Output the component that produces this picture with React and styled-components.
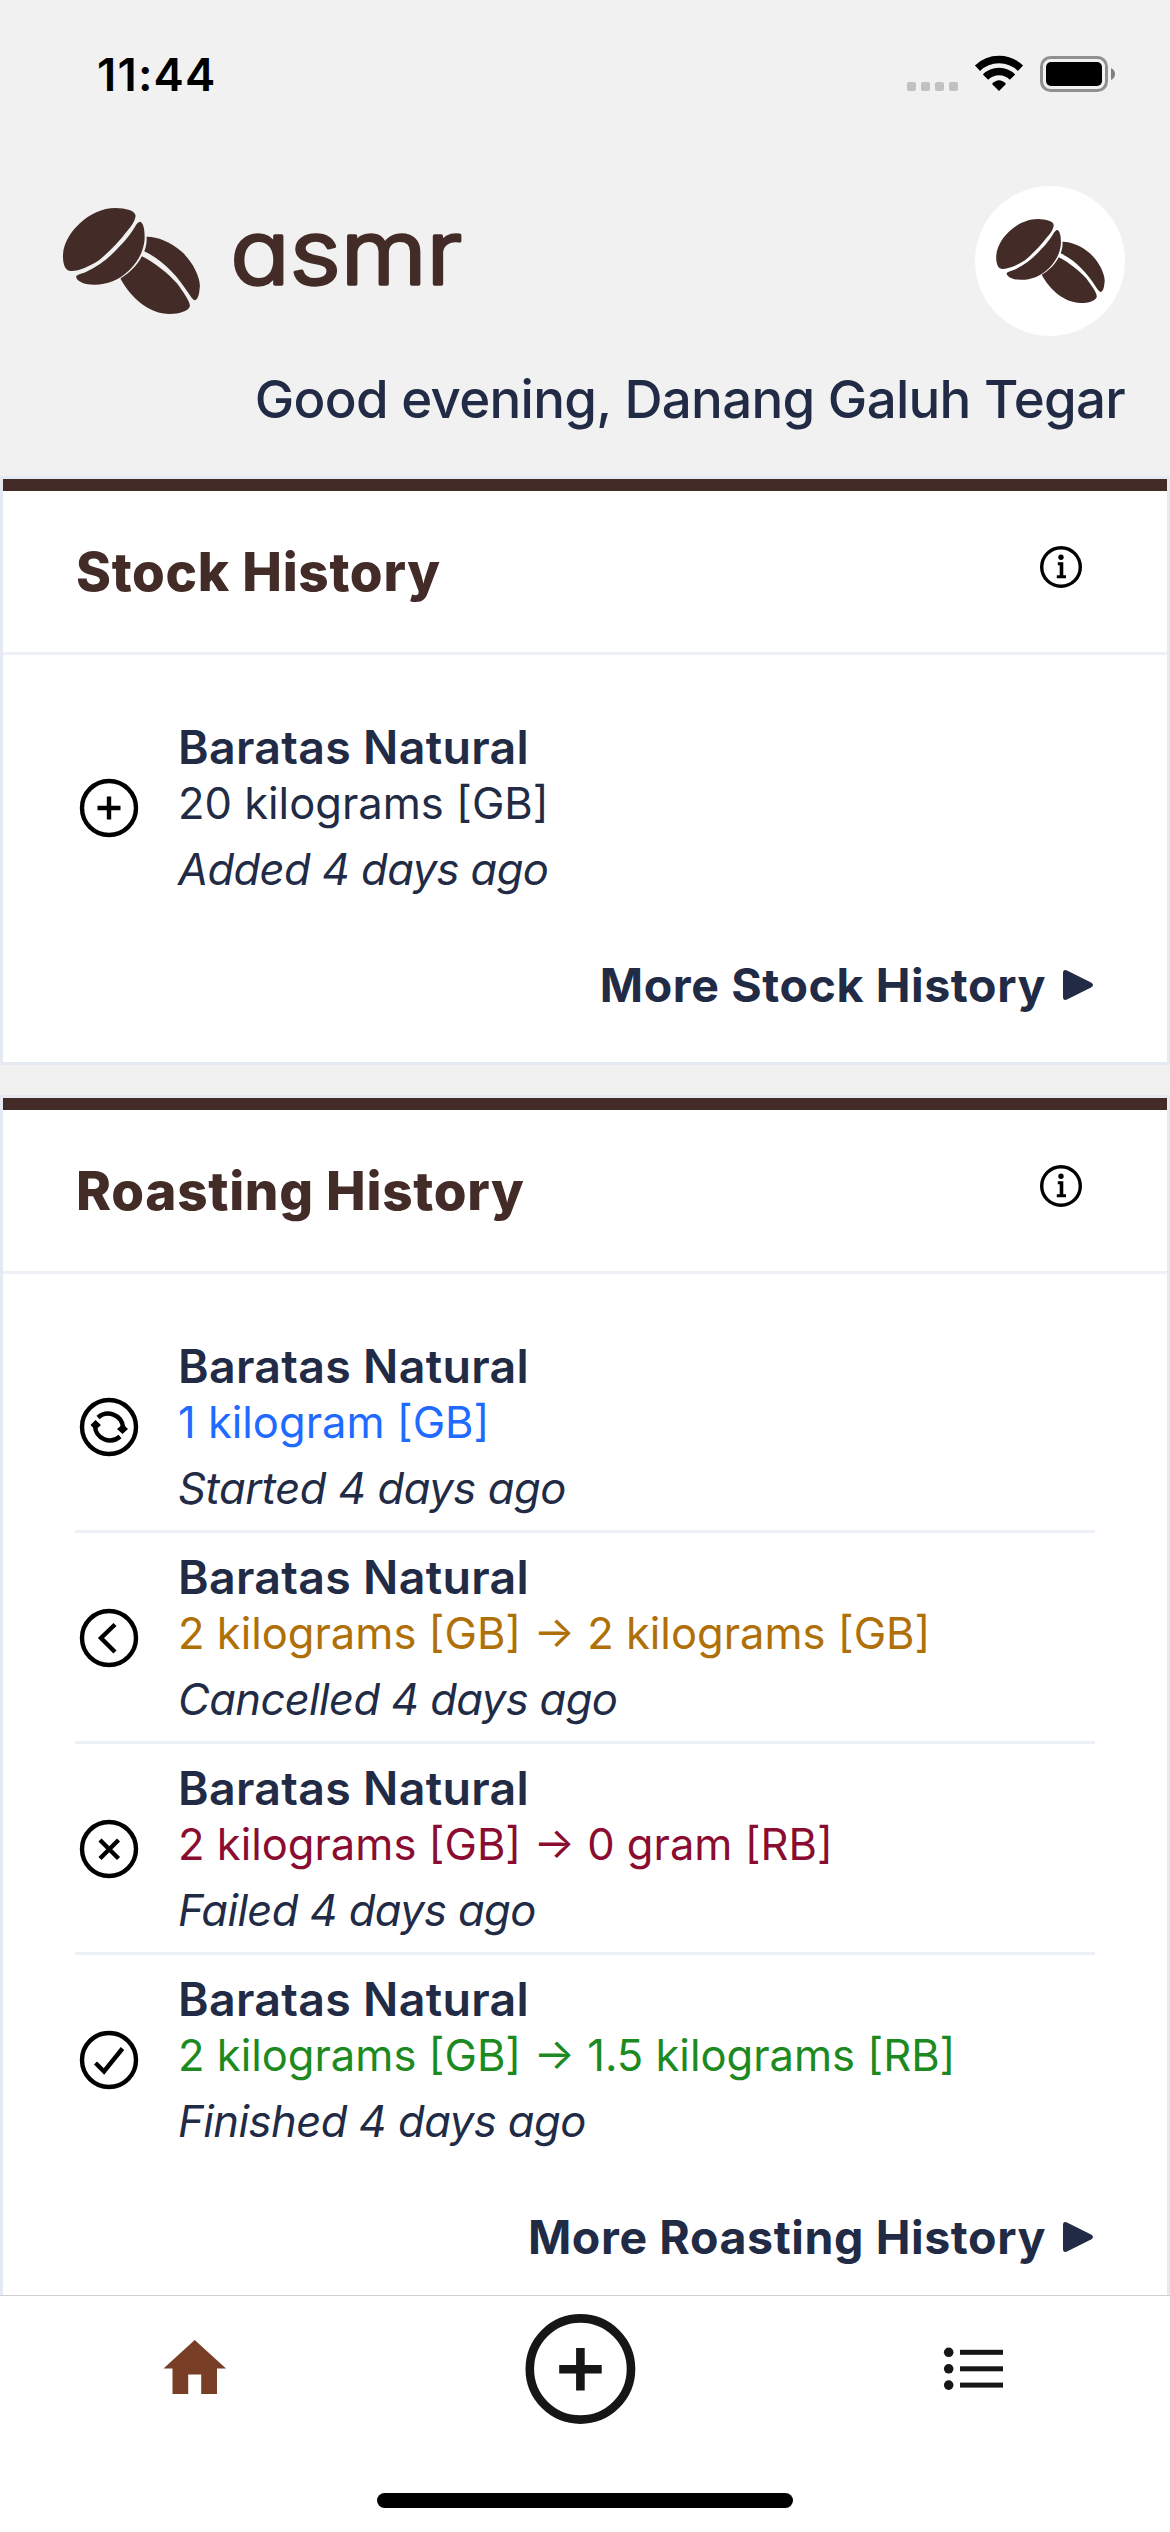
import React from "react";
import styled, { createGlobalStyle } from "styled-components";

const GlobalStyle = createGlobalStyle`
  * { box-sizing: border-box; }
  body { margin: 0; background: #f1f1f1; }
`;

const INK = "#222b45";
const BROWN = "#432c27";

const Screen = styled.div`
  width: 1170px;
  height: 2532px;
  overflow: hidden;
  display: flex;
  flex-direction: column;
  background: #f1f1f1;
  color: ${INK};
  font-family: Inter, "Liberation Sans", sans-serif;
  white-space: nowrap;
`;

const StatusBar = styled.div`
  flex: none;
  height: 141px;
  padding: 46px 55px 0 97px;
  display: flex;
  justify-content: space-between;
  align-items: flex-start;
`;

const Clock = styled.span`
  font-size: 45.5px;
  line-height: 58px;
  font-weight: 600;
  letter-spacing: 1.2px;
  color: #000;
`;

const StatusIcons = styled.svg`
  display: block;
  width: 210px;
  height: 46px;
`;

const Header = styled.header`
  flex: none;
  height: 335px;
  padding: 45px 45px 0 63px;
`;

const HeaderRow = styled.div`
  display: flex;
  justify-content: space-between;
  align-items: flex-start;
`;

const Logo = styled.div`
  display: flex;
  align-items: flex-start;
  padding-top: 22px;
`;

const BeansSvg = styled.svg`
  display: block;
  width: ${(p) => p.$width}px;
  height: ${(p) => p.$height}px;
  fill: ${BROWN};
`;

const Wordmark = styled.svg`
  display: block;
  width: 260px;
  height: 128px;
  margin-left: 23px;
  overflow: visible;
  fill: ${BROWN};
  stroke: ${BROWN};
  stroke-width: 3.4;
  stroke-linejoin: round;
  font-family: Inter, sans-serif;
  font-size: 88px;
  font-weight: 300;
  font-feature-settings: "cv11" 1;
`;

const Avatar = styled.div`
  width: 150px;
  height: 150px;
  border-radius: 50%;
  background: #fff;
  display: flex;
  align-items: center;
  justify-content: center;
`;

const Greeting = styled.p`
  margin: 29px 0 0;
  font-size: 52.8px;
  line-height: 68px;
  font-weight: 450;
  letter-spacing: -0.7px;
  text-align: right;
`;

const Feed = styled.main`
  flex: 1;
  min-height: 0;
  overflow: hidden;
  display: flex;
  flex-direction: column;
  gap: 30px;
`;

const Card = styled.section`
  flex: none;
  border: 3px solid #e4e9f2;
  background: #fff;
`;

const CardHeader = styled.div`
  height: 176px;
  border-top: 12px solid ${BROWN};
  border-bottom: 3px solid #edf1f7;
  padding: 0 82px 0 73px;
  display: flex;
  align-items: center;
  justify-content: space-between;
`;

const CardTitle = styled.h2`
  margin: 0;
  font-size: 53px;
  line-height: 64px;
  font-weight: 800;
  letter-spacing: 0.7px;
  color: ${BROWN};
`;

const InfoIcon = styled.svg`
  width: 48px;
  height: 48px;
  margin-bottom: 10px;
`;

const CardBody = styled.div`
  padding: 48px 72px;
`;

const Row = styled.div`
  height: 208px;
  display: flex;
  align-items: center;
  & + & {
    border-top: 3px solid #edf1f7;
    height: 211px;
  }
`;

const RowIcon = styled.svg`
  flex: none;
  width: 60px;
  height: 60px;
  margin: 1px 39px 0 4px;
  fill: none;
  stroke: #000;
  stroke-width: 4.4;
`;

const RowText = styled.div`
  display: flex;
  flex-direction: column;
`;

const RowName = styled.div`
  font-size: 46.5px;
  line-height: 58px;
  font-weight: 600;
  letter-spacing: 0.3px;
`;

const RowAmount = styled.div`
  font-size: 43.5px;
  line-height: 54px;
  color: ${(p) => p.$color};
`;

const RowTime = styled.div`
  margin-top: 12px;
  font-size: 43.5px;
  line-height: 54px;
  font-style: italic;
  letter-spacing: ${(p) => p.$spacing}px;
`;

const MoreLink = styled.div`
  margin-top: 45px;
  display: flex;
  justify-content: flex-end;
  align-items: center;
  gap: 16px;
  padding-right: 1px;
  font-size: 46.5px;
  line-height: 58px;
  font-weight: 700;
  letter-spacing: 0.6px;
`;

const Triangle = styled.svg`
  width: 32px;
  height: 32px;
  fill: ${INK};
`;

const TabBar = styled.nav`
  flex: none;
  height: 237px;
  border-top: 1px solid #d0d0d0;
  background: #fff;
  display: flex;
  flex-direction: column;
  align-items: center;
`;

const Tabs = styled.div`
  width: 100%;
  height: 197px;
  display: grid;
  grid-template-columns: repeat(3, 1fr);
  justify-items: center;
`;

const TabIcon = styled.svg`
  width: 120px;
  height: 120px;
  margin-top: 13px;
`;

const HomeIndicator = styled.div`
  width: 416px;
  height: 15px;
  border-radius: 8px;
  background: #000;
`;

const Beans = ({ width, height }) => (
  <BeansSvg $width={width} $height={height} viewBox="72 85 408 316">
    <path d="M98 273C80 275 70 255 72 222C76 160 150 85 228 85C260 86 290 93 288 110C286 125 275 140 262 155C235 190 210 215 180 240C150 260 120 272 98 273Z" />
    <path d="M302 126C312 130 316 150 315 180C312 210 300 240 270 270C235 305 190 317 155 313C130 312 110 300 111 289C114 284 125 282 140 276C180 258 215 228 240 200C265 175 280 152 290 135C296 128 298 126 302 126Z" />
    <path d="M321 171C350 170 390 185 425 215C460 245 485 300 479 325C478 345 472 360 464 360C458 358 452 348 445 338C415 290 370 240 314 214C320 200 322 185 321 171Z" />
    <path d="M307 229C345 248 385 280 412 310C430 335 452 365 450 378C446 392 420 401 390 401C330 400 275 355 243 295C270 278 292 258 307 229Z" />
  </BeansSvg>
);

const glyphs = {
  added: <path d="M30 18.5V41.5M18.5 30H41.5" />,
  started: (
    <>
      <path d="M19 20.5A15 15 0 0 1 44 30" />
      <path d="M41 39.5A15 15 0 0 1 16 29" />
      <path d="M38 32L44 27L49 32L43.5 37Z M11.5 28L16.5 23L22 28L16.5 33Z" fill="#000" stroke="none" />
    </>
  ),
  cancelled: <path d="M36 16.5L22 30L36 44" />,
  failed: <path d="M21 21L39.5 39.5M39.5 21L21 39.5" />,
  finished: <path d="M16.5 33L25 41.5L43.5 18.5" />,
};

const HistoryCard = ({ title, items, more }) => (
  <Card>
    <CardHeader>
      <CardTitle>{title}</CardTitle>
      <InfoIcon viewBox="0 0 48 48">
        <circle cx="24" cy="24" r="19.3" fill="none" stroke="#000" strokeWidth="3.4" />
        <circle cx="24" cy="14.3" r="2.7" />
        <path d="M20.800 19.300H26.300V32.300H29V35.300H19.800V32.300H22.700V22.300H20.800Z" />
      </InfoIcon>
    </CardHeader>
    <CardBody>
      {items.map((it) => (
        <Row key={it.kind}>
          <RowIcon viewBox="0 0 60 60">
            <circle cx="30" cy="30" r="27" />
            {glyphs[it.kind]}
          </RowIcon>
          <RowText>
            <RowName>Baratas Natural</RowName>
            <RowAmount $color={it.color}>{it.amount}</RowAmount>
            <RowTime $spacing={it.spacing}>{it.time}</RowTime>
          </RowText>
        </Row>
      ))}
      <MoreLink>
        {more}
        <Triangle viewBox="0 0 32 32">
          <path d="M1 4Q1 0 5 1.500L29 13.500Q33 16 29 18.500L5 30.500Q1 32 1 28Z" />
        </Triangle>
      </MoreLink>
    </CardBody>
  </Card>
);

const stock = [{ kind: "added", amount: "20 kilograms [GB]", time: "Added 4 days ago", color: INK, spacing: -0.57 }];

const roasting = [
  { kind: "started", amount: "1 kilogram [GB]", time: "Started 4 days ago", color: "#1f6bff", spacing: -0.42 },
  { kind: "cancelled", amount: "2 kilograms [GB] → 2 kilograms [GB]", time: "Cancelled 4 days ago", color: "#b07008", spacing: -0.6 },
  { kind: "failed", amount: "2 kilograms [GB] → 0 gram [RB]", time: "Failed 4 days ago", color: "#8a0c30", spacing: -0.6 },
  { kind: "finished", amount: "2 kilograms [GB] → 1.5 kilograms [RB]", time: "Finished 4 days ago", color: "#1c8a20", spacing: -0.5 },
];

export default function App() {
  return (
    <>
      <GlobalStyle />
      <Screen>
        <StatusBar>
          <Clock>11:44</Clock>
          <StatusIcons viewBox="905 46 210 46">
            <g fill="#c1c1c1">
              <rect x="907" y="82" width="9" height="9" rx="2" />
              <rect x="921" y="82" width="9" height="9" rx="2" />
              <rect x="935" y="82" width="9" height="9" rx="2" />
              <rect x="949" y="82" width="9" height="9" rx="2" />
            </g>
            <g fill="none" stroke="#000" strokeWidth="7.5">
              <path d="M977.5 68.2A31 31 0 0 1 1020.5 68.2" />
              <path d="M985.5 77.2A19 19 0 0 1 1012.5 77.2" />
            </g>
            <path d="M992 84Q999 76.5 1006 84L999 91Z" />
            <rect x="1041.5" y="57.5" width="65" height="33" rx="9" fill="none" stroke="#909090" strokeWidth="3" />
            <rect x="1046" y="62" width="56" height="24" rx="5" />
            <path d="M1111 68Q1115 70 1115 74Q1115 78 1111 80Z" fill="#808080" />
          </StatusIcons>
        </StatusBar>
        <Header>
          <HeaderRow>
            <Logo>
              <Beans width={137} height={106} />
              <Wordmark viewBox="0 0 260 128">
                <text x="7.5" y="76.200" textLength="231.500" lengthAdjust="spacingAndGlyphs">asmr</text>
              </Wordmark>
            </Logo>
            <Avatar>
              <Beans width={109} height={84} />
            </Avatar>
          </HeaderRow>
          <Greeting>Good evening, Danang Galuh Tegar</Greeting>
        </Header>
        <Feed>
          <HistoryCard title="Stock History" items={stock} more="More Stock History" />
          <HistoryCard title="Roasting History" items={roasting} more="More Roasting History" />
        </Feed>
        <TabBar>
          <Tabs>
            <TabIcon viewBox="135 2309 120 120">
              <path fill="#783e26" d="M194.700 2340L226 2368.500H217V2394H201.200V2374.500H188.200V2394H172.500V2368.500H163.500Z" />
            </TabIcon>
            <TabIcon viewBox="525 2309 120 120" fill="none" stroke="#161616" strokeWidth="8.6">
              <circle cx="580.4" cy="2369" r="50.6" />
              <path d="M580.400 2348V2390.500M559.200 2369.200H601.700" />
            </TabIcon>
            <TabIcon viewBox="915 2309 120 120" fill="#161616">
              {[2352.3, 2368.8, 2385.1].map((y) => (
                <g key={y}>
                  <circle cx="948.7" cy={y} r="4.8" />
                  <rect x="960" y={y - 2.5} width="43" height="5" />
                </g>
              ))}
            </TabIcon>
          </Tabs>
          <HomeIndicator />
        </TabBar>
      </Screen>
    </>
  );
}
